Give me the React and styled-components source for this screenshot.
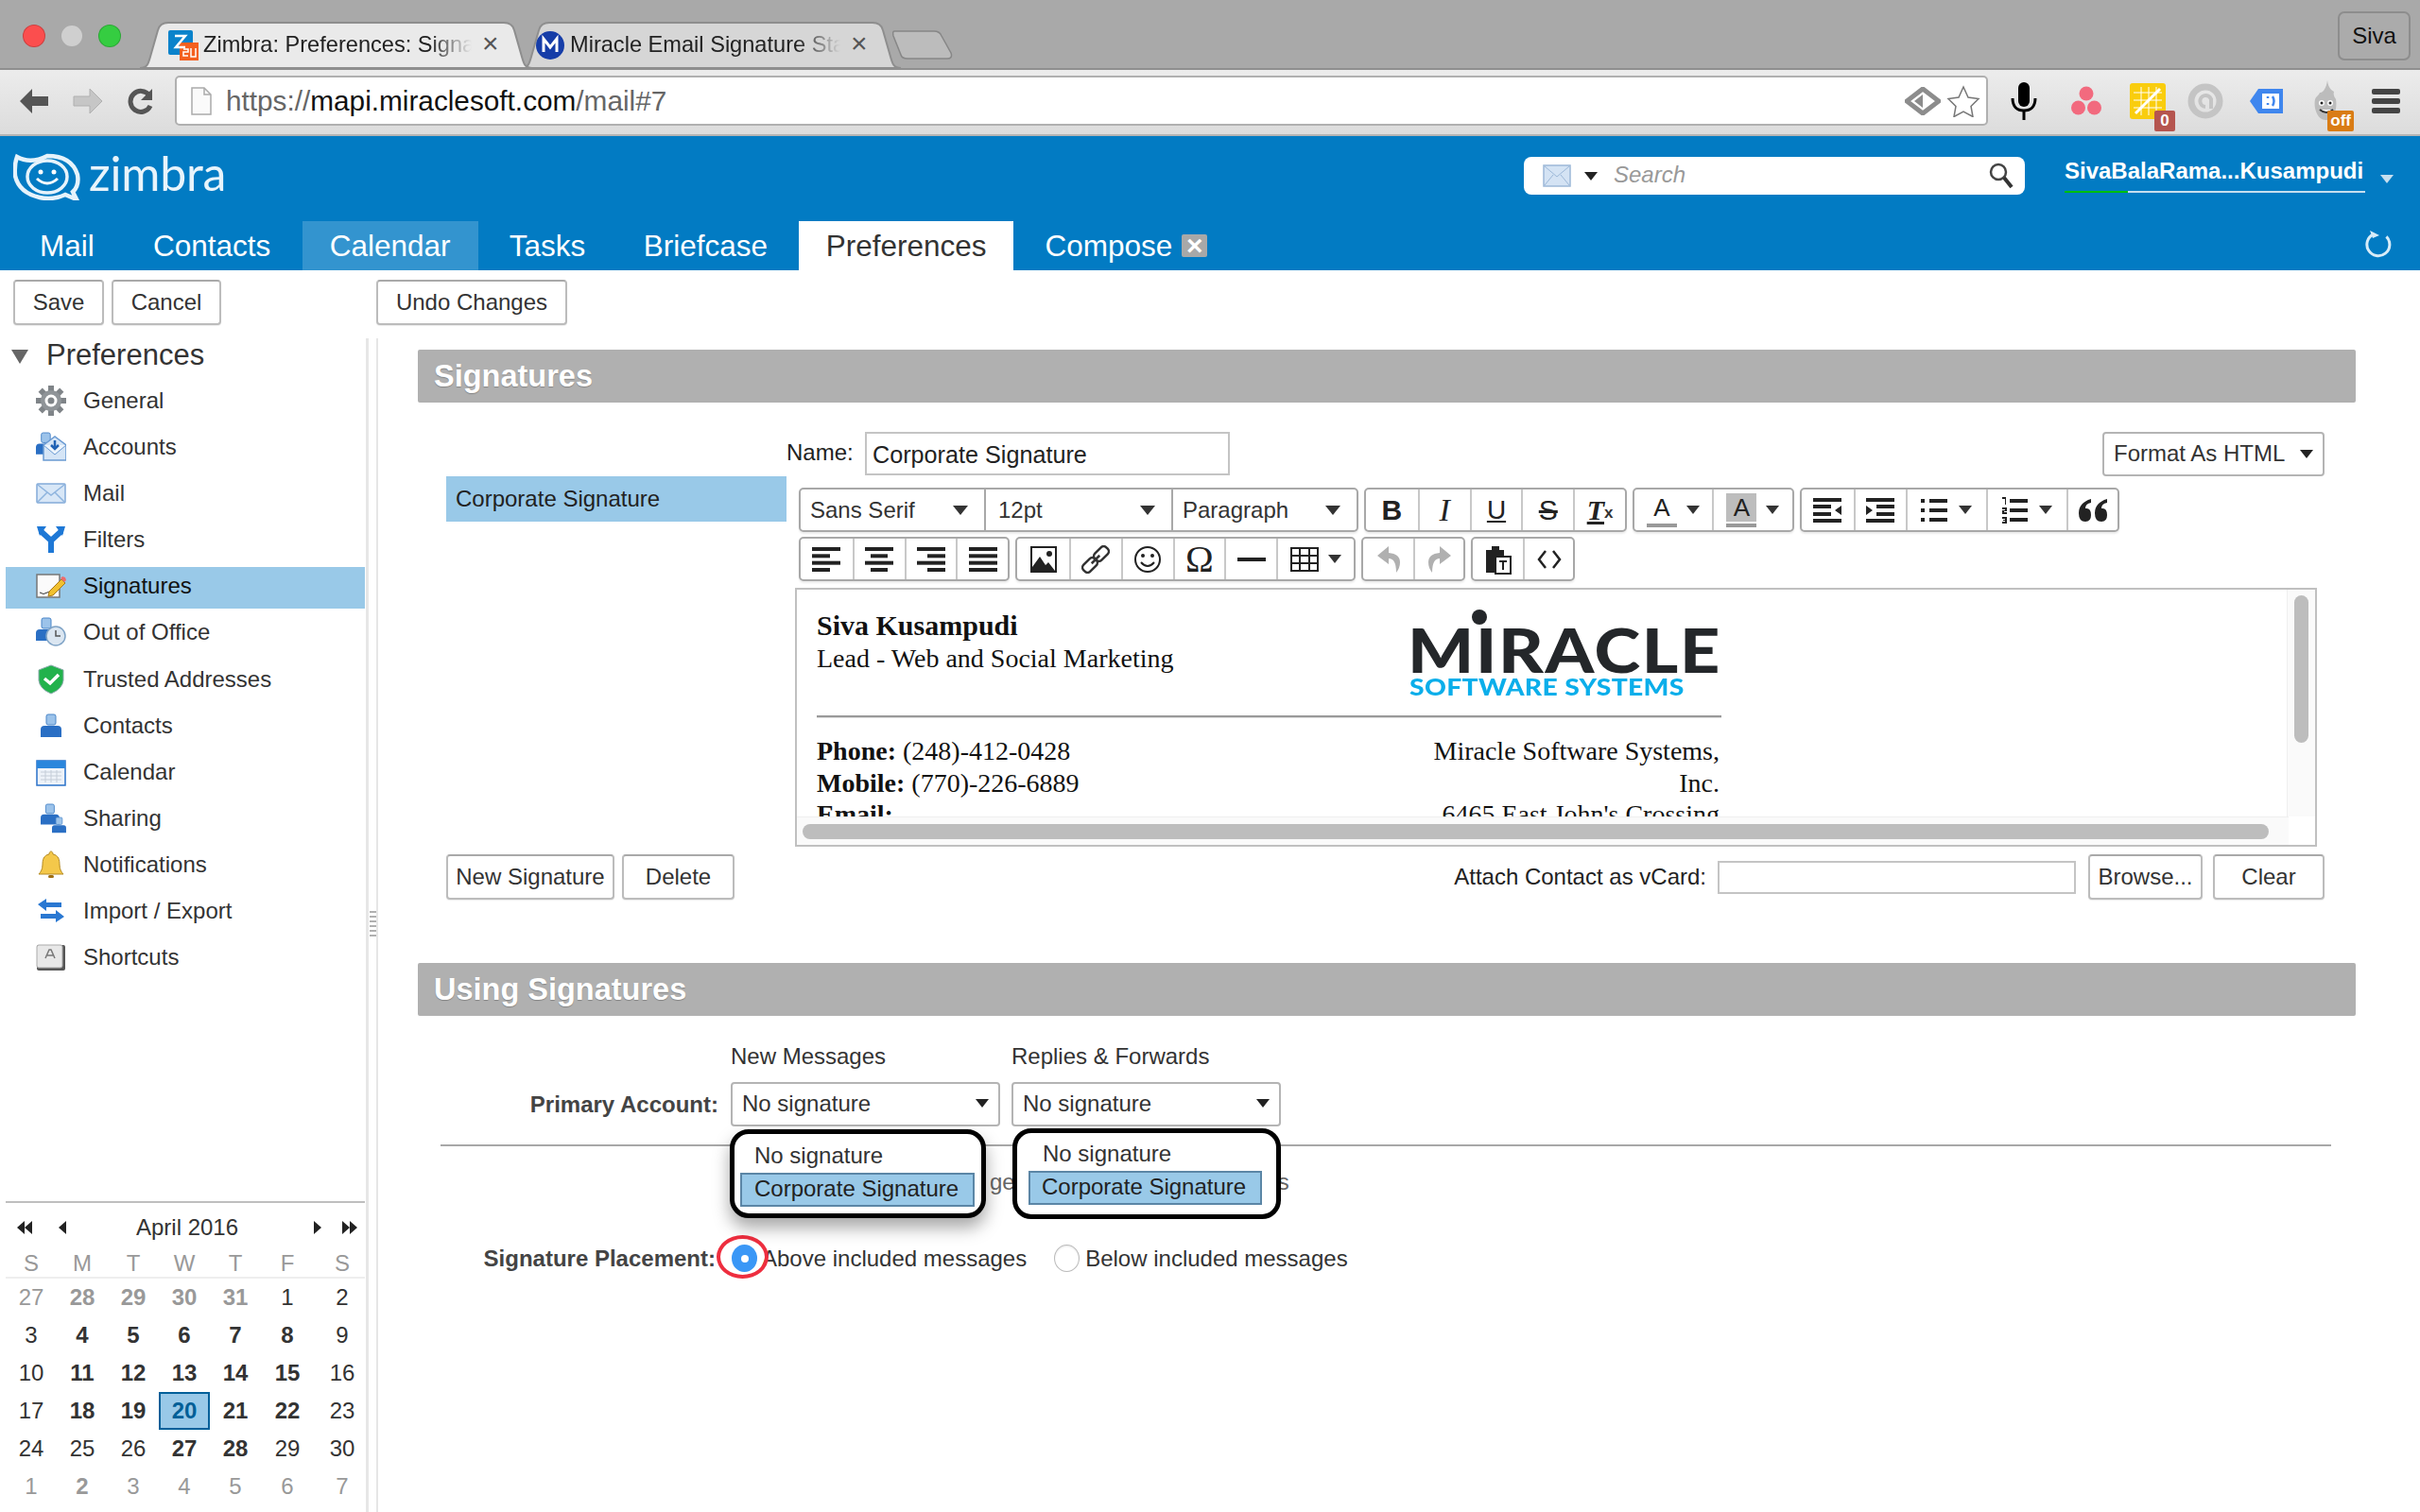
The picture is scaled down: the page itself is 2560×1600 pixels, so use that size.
import React from 'react';
import styled, { createGlobalStyle } from 'styled-components';

const Global = createGlobalStyle`
  html, body { margin: 0; padding: 0; width: 2560px; height: 1600px; overflow: hidden; background: #fff; }
  body { font-family: "Liberation Sans", Arial, sans-serif; font-size: 24px; color: #333; }
  * { box-sizing: border-box; }
`;

const Page = styled.div`width: 2560px; height: 1600px; display: flex; flex-direction: column; overflow: hidden;`;

/* Browser chrome */
const TabStrip = styled.div`height: 72px; flex: none; background: #a9a9a9; display: flex; align-items: flex-end; padding-left: 24px; position: relative;`;
const Lights = styled.div`display: flex; gap: 16px; align-self: flex-start; margin-top: 26px; margin-right: 20px;`;
const Light = styled.span`width: 24px; height: 24px; border-radius: 50%; background: ${p => p.$c}; border: 1px solid rgba(0,0,0,.18);`;
const BrowserTab = styled.div`
  position: relative; height: 49px; width: ${p => p.$w}px; margin-left: ${p => p.$ml || 0}px; flex: none;
  display: flex; align-items: center; padding-left: ${p => p.$pl}px; z-index: ${p => p.$z};
  font-size: 23.6px; color: #222;
  & > svg.shape { position: absolute; left: 0; top: 0; z-index: -1; }
`;
const TabTitle = styled.span`
  margin-left: 5px; width: ${p => p.$w}px; white-space: nowrap; flex: none;
  mask-image: linear-gradient(to right, #000 84%, transparent 100%);
`;
const TabClose = styled.span`margin-left: 11px; font-size: 30px; color: #555; line-height: 1; margin-top: -3px;`;
const NewTab = styled.div`margin-left: -9px; margin-bottom: 9px; width: 64px; height: 31px; flex: none;`;
const Profile = styled.div`
  position: absolute; right: 10px; top: 12px; width: 77px; height: 52px; border: 2px solid #8d8d8d; border-radius: 7px;
  display: flex; align-items: center; justify-content: center; font-size: 24px; color: #111; background: #ababab;
`;
const Toolbar = styled.div`
  height: 72px; flex: none; background: linear-gradient(#ececec, #dcdcdc); border-bottom: 2px solid #b4b4b4; border-top: 2px solid #8f8f8f;
  display: flex; align-items: center; padding-left: 20px; position: relative;
`;
const NavIcons = styled.div`display: flex; align-items: center; gap: 25px; width: 165px; margin-top: -3px;`;
const Omnibox = styled.div`
  width: 1918px; height: 53px; background: #fff; border: 2px solid #b0b0b0; border-radius: 5px; margin-top: -3px;
  display: flex; align-items: center; padding-left: 15px; font-size: 29.75px; color: #666; flex: none;
`;
const Host = styled.span`color: #111;`;
const UrlText = styled.span`margin-left: 15px; margin-top: 1px;`;
const OmniRight = styled.div`margin-left: auto; display: flex; align-items: center; gap: 6px; padding-right: 6px;`;
const Extensions = styled.div`flex: 1; display: flex; align-items: center; margin-top: -3px; position: relative; height: 60px;`;
const Ext = styled.div`position: relative; width: ${p => p.$w}px; margin-left: ${p => p.$ml}px; height: 44px; flex: none; display: flex; align-items: center; justify-content: center;`;
const ExtBadge = styled.span`
  position: absolute; right: ${p => p.$r}px; bottom: -10px; height: 22px; min-width: 22px; padding: 0 3px; background: ${p => p.$c};
  border-radius: 2px; color: #fff; font-size: 17px; line-height: 22px; text-align: center; font-weight: 700;
`;

/* Zimbra header */
const Header = styled.div`height: 142px; flex: none; background: #027bc3; display: flex; flex-direction: column;`;
const HeaderTop = styled.div`height: 90px; display: flex; align-items: flex-start; position: relative; padding-left: 14px;`;
const LogoBox = styled.div`display: flex; align-items: flex-start; margin-top: 18px; width: 226px; flex: none;`;
const LogoText = styled.span`
  font-family: Lato, "Open Sans", sans-serif; font-weight: 400; font-size: 50px; line-height: 48px; color: #e8f4fb; margin-left: 7px; margin-top: -3px; letter-spacing: -.2px;
`;
const SearchBox = styled.div`
  margin-left: 1372px; margin-top: 22px; width: 530px; height: 40px; background: #fff; border-radius: 8px;
  display: flex; align-items: center; padding: 0 12px 0 20px; flex: none;
`;
const SearchText = styled.span`font-style: italic; color: #999; margin-left: 17px; font-size: 24px; margin-top: -2px;`;
const Caret = styled.span`
  display: inline-block; width: 0; height: 0; flex: none;
  border-left: ${p => p.$s || 7}px solid transparent; border-right: ${p => p.$s || 7}px solid transparent;
  border-top: ${p => (p.$s || 7) * 1.3}px solid ${p => p.$c || '#222'};
`;
const UserBox = styled.div`margin-left: 42px; margin-top: 24px; width: 318px; flex: none;`;
const UserName = styled.div`
  color: #fff; font-weight: 700; font-size: 24px; white-space: nowrap; line-height: 26px;
`;
const Quota = styled.div`margin-top: 8px; height: 2px; background: #c6dfef; position: relative;`;
const QuotaFill = styled.div`height: 100%; background: #00c000;`;
const UserCaret = styled.span`margin-left: 16px; margin-top: 28px;`;
const Nav = styled.div`height: 52px; display: flex; align-items: stretch; padding-left: 13px; gap: 4.3px; position: relative;`;
const NavTab = styled.div`
  display: flex; align-items: center; padding: 0 ${p => p.$pr || p.$pad || 29}px 0 ${p => p.$pad || 29}px; font-size: 31.5px;
  background: ${p => p.$active ? '#fff' : p.$hover ? '#3394cf' : 'transparent'};
  color: ${p => p.$active ? '#333' : '#fff'};
  flex: none;
`;
const CloseBox = styled.span`
  width: 27px; height: 24px; margin-left: 10px; background: #a8a8a8; border-radius: 2px; color: #fff; font-size: 30px; font-weight: 700;
  display: inline-flex; align-items: center; justify-content: center; line-height: 24px;
`;
const NavRefresh = styled.div`margin-left: auto; margin-right: 29px; margin-top: -4px; display: flex; align-items: center;`;

/* Buttons */
const Btn = styled.div`
  height: 48px; border: 2px solid #bcbcbc; border-top-color: #a9a9a9; border-radius: 4px; background: #fff; font-size: 24px; color: #333;
  display: flex; align-items: center; justify-content: center; flex: none; width: ${p => p.$w}px;
  margin-left: ${p => p.$ml || 0}px; box-shadow: 0 1px 1px rgba(0,0,0,.08);
`;
const ActionBar = styled.div`height: 64px; flex: none; display: flex; align-items: flex-start; padding: 10px 0 0 14px; gap: 8px;`;

/* Body layout */
const Body = styled.div`flex: 1; display: flex; padding-top: 8px; min-height: 0;`;
const Sidebar = styled.div`width: 390px; flex: none; border-right: 3px solid #e6e6e6; display: flex; flex-direction: column;`;
const Sash = styled.div`width: 10px; flex: none; border-right: 2px solid #e6e6e6; display: flex; flex-direction: column; padding-top: 606px; align-items: center; gap: 3px;`;
const SashDot = styled.span`width: 7px; height: 2px; background: #b0b0b0; flex: none;`;
const TreeHead = styled.div`height: 32px; margin-top: 2px; display: flex; align-items: center; font-size: 31px; color: #333; padding-left: 12px;`;
const TreeArrow = styled.span`width: 0; height: 0; border-left: 9px solid transparent; border-right: 9px solid transparent; border-top: 15px solid #666; margin-right: 19px; margin-top: 3px;`;
const TreeList = styled.div`margin-top: 12px; display: flex; flex-direction: column; gap: 5.1px;`;
const TreeItem = styled.div`
  height: 44px; margin-left: 6px; width: 380px; padding: 0 0 4px 32px; display: flex; align-items: center; gap: 18px; font-size: 24px;
  color: ${p => p.$sel ? '#111' : '#333'}; background: ${p => p.$sel ? '#99c9e8' : 'transparent'};
`;
const TreeIcon = styled.span`width: 32px; height: 32px; flex: none; display: block;`;

const Cal = styled.div`margin-top: auto; margin-bottom: 7px; margin-left: 6px; width: 380px; border-top: 2px solid #bfbfbf; flex: none;`;
const CalHead = styled.div`height: 49px; padding: 3px 8px 0 12px; display: flex; align-items: center; justify-content: space-between; color: #333;`;
const CalTitle = styled.span`margin-right: 6px;`;
const CalArrows = styled.div`display: flex; align-items: center; gap: ${p => p.$g || 26}px;`;
const CalRow = styled.div`display: grid; grid-template-columns: 54px 54px 54px 54px 54px 56px 60px; height: ${p => p.$h}px; align-items: center; ${p => p.$line ? 'border-bottom: 2px solid #eee;' : ''}`;
const CalCell = styled.span`
  text-align: center; font-size: 24px; font-weight: ${p => p.$b ? 700 : 400}; color: ${p => p.$c || '#333'};
  ${p => p.$sel ? 'background:#99c9e8;border:2px solid #00609a;height:40px;line-height:36px;' : ''}
`;

/* Main */
const Main = styled.div`flex: 1; padding-left: 42px; min-width: 0;`;
const SectionBar = styled.div`
  width: 2050px; height: 56px; background: #b0b0b0; border-radius: 2px; margin-top: ${p => p.$mt}px; color: #fff; font-weight: 700; font-size: 32.5px;
  display: flex; align-items: center; padding: 1px 0 0 17px; text-shadow: 0 1px 1px rgba(0,0,0,.25);
`;
const SigTop = styled.div`display: flex; padding-left: 30px;`;
const SigList = styled.div`width: 360px; flex: none; padding-top: 78px;`;
const SigItem = styled.div`height: 48px; background: #99c9e8; padding-left: 10px; display: flex; align-items: center; color: #222;`;
const SigRight = styled.div`width: 1627px; flex: none;`;
const NameRow = styled.div`display: flex; align-items: center; margin-top: 31px; height: 46px; padding-left: 0;`;
const NameLabel = styled.span`color: #222; width: 83px; flex: none; margin-top: -2px;`;
const TextBox = styled.div`
  width: ${p => p.$w}px; height: ${p => p.$h || 46}px; border: 2px solid #c4c4c4; padding: 2px 0 0 6px; display: flex; align-items: center; color: #222; flex: none; background: #fff; font-size: 25.2px;
`;
const FormatBtn = styled.div`
  margin-left: auto; width: 235px; height: 47px; border: 2px solid #b4b4b4; border-radius: 4px; display: flex; align-items: center; justify-content: space-between; padding: 0 10px; color: #333;
`;
const McRow = styled.div`display: flex; gap: ${p => p.$g || 6}px; padding-left: 13px; margin-top: ${p => p.$mt}px; height: 47px;`;
const McGroup = styled.div`display: flex; border: 2px solid #a8a8a8; border-radius: 5px; background: #fff; box-shadow: 0 2px 2px rgba(0,0,0,.08); flex: none;`;
const McBtn = styled.div`
  width: ${p => p.$w || 54.8}px; flex: none; display: flex; align-items: center; justify-content: center; gap: ${p => p.$gap || 0}px;
  border-left: ${p => p.$first ? 'none' : '2px solid #c8c8c8'}; color: ${p => p.$dis ? '#aaa' : '#333'}; position: relative;
`;
const McSelect = styled.div`
  width: ${p => p.$w}px; flex: none; display: flex; align-items: center; justify-content: space-between; padding: 0 17px 0 ${p => p.$pl || 10}px; font-size: 24px; color: #333;
  border-left: ${p => p.$first ? 'none' : '2px solid #a8a8a8'};
`;
const Glyph = styled.span`
  font-family: ${p => p.$serif ? '"Liberation Serif"' : '"Liberation Sans"'}, serif; font-size: ${p => p.$s}px; line-height: 1;
  font-weight: ${p => p.$b ? 700 : 400}; font-style: ${p => p.$i ? 'italic' : 'normal'}; color: #222;
  text-decoration: ${p => p.$d || 'none'};
`;
const SmallX = styled.span`font-size: 17px; font-weight: 700; color: #333; align-self: flex-end; margin-bottom: 8px;`;
const ColorA = styled.span`
  display: inline-flex; flex-direction: column; align-items: center; width: 32px; font-size: 26px; line-height: 30px; color: #222; position: relative;
  background: transparent;
`;
const ColorALetter = styled.span`width: 100%; text-align: center; background: ${p => p.$bg || 'transparent'};`;
const ColorBar = styled.span`width: 100%; height: 4px; background: #999; margin-top: 2px;`;

const Editor = styled.div`
  margin: 7px 0 0 9px; width: 1610px; height: 274px; border: 2px solid #c0c0c0; position: relative; overflow: hidden; background: #fff;
  font-family: "Liberation Serif", serif; font-size: 28px; color: #111;
`;
const SigDoc = styled.div`margin: 21px 0 0 21px; width: 957px;`;
const SigHead = styled.div`display: flex; justify-content: space-between; height: 112px;`;
const SigName = styled.div`font-weight: 700; font-size: 30px; line-height: 34px;`;
const SigLine = styled.div`line-height: 35px; white-space: nowrap;`;
const Brand = styled.div`position: relative; width: 327px; margin-right: 2px; height: 112px; font-family: Lato, "Open Sans", sans-serif;`;
const BrandTitle = styled.div`position: absolute; left: -3px; top: 16px; font-weight: 900; font-size: 65px; line-height: 52px; color: #24272a; letter-spacing: 1.5px; white-space: nowrap; transform: scaleX(1.135); transform-origin: left center;`;
const BrandDot = styled.span`position: absolute; left: 65px; top: 0; width: 16px; height: 16px; border-radius: 50%; background: #24272a;`;
const BrandSub = styled.div`position: absolute; left: -1px; top: 69px; font-weight: 900; font-size: 25px; line-height: 24px; color: #0baeea; white-space: nowrap; letter-spacing: .3px; transform: scaleX(1.13); transform-origin: left center;`;
const SigRule = styled.div`height: 3px; background: #999; border-bottom: 1px solid #ddd;`;
const SigBody = styled.div`display: flex; justify-content: space-between; margin-top: 18px; line-height: 33.5px;`;
const SigAddr = styled.div`text-align: right; margin-right: 2px; white-space: nowrap;`;
const VBar = styled.div`position: absolute; right: 0; top: 0; width: 30px; height: 240px; background: #fafafa; border-left: 1px solid #efefef;`;
const VThumb = styled.div`margin: 6px 0 0 7px; width: 15px; height: 156px; border-radius: 8px; background: #bdbdbd;`;
const HBar = styled.div`position: absolute; left: 0; bottom: 0; width: 1578px; height: 30px; background: #fafafa; border-top: 1px solid #efefef; padding: 7px 0 0 6px;`;
const HThumb = styled.div`width: 1551px; height: 16px; border-radius: 8px; background: #bdbdbd;`;
const SigBottom = styled.div`display: flex; align-items: center; padding-left: 30px; margin-top: 8px; width: 2017px;`;
const AttachLabel = styled.span`margin-left: auto; margin-right: 12px; color: #222;`;

const ColHead = styled.div`display: flex; padding-left: 331px; margin-top: 28px; height: 30px; align-items: center; color: #333;`;
const ColLabel = styled.span`width: 297px; flex: none;`;
const AccountRow = styled.div`display: flex; align-items: center; margin-top: 12px; height: 47px;`;
const RowLabel = styled.span`width: ${p => p.$w}px; flex: none; text-align: right; font-weight: 700; color: #444; white-space: nowrap;`;
const SelectWrap = styled.div`position: relative; width: 285px; margin-left: ${p => p.$ml}px; flex: none;`;
const Select = styled.div`
  height: 47px; border: 2px solid #b4b4b4; border-radius: 4px; display: flex; align-items: center; justify-content: space-between; padding: 0 10px 2px 10px; color: #333; background: #fff;
`;
const Popup = styled.div`
  position: absolute; left: ${p => p.$l}px; top: ${p => p.$t}px; width: ${p => p.$w}px; height: ${p => p.$h}px; background: #fff; border: 5px solid #000; border-radius: 20px;
  z-index: 3; padding: ${p => p.$pt}px 0 0 ${p => p.$pl}px; box-shadow: ${p => p.$shadow ? '0 10px 18px rgba(0,0,0,.35)' : 'none'}; color: #333;
`;
const PopNo = styled.div`height: 32px; line-height: 32px; padding-left: ${p => p.$i}px;`;
const PopSel = styled.div`
  margin-top: 2px; width: ${p => p.$w}px; height: 36px; background: #99c9e8; border: 2px solid #5b86a6; padding-left: ${p => p.$i - 2}px; line-height: 30px; color: #222;
`;
const Divider = styled.div`margin: 19px 0 0 24px; width: 2000px; height: 2px; background: #a8a8a8;`;
const HiddenRow = styled.div`height: 96px; display: flex; align-items: flex-start; padding: 24px 0 0 605px; color: #666;`;
const HiddenEnd = styled.span`margin-left: 278px;`;
const PlaceRow = styled.div`display: flex; align-items: center; height: 45px;`;
const RadioWrap = styled.span`position: relative; width: 27px; height: 29px; margin-left: ${p => p.$ml}px; margin-right: ${p => p.$mr}px; flex: none; display: block;`;
const RadioOn = styled.span`display: flex; align-items: center; justify-content: center; width: 27px; height: 29px; border-radius: 50%; background: #3a97f6;`;
const RadioPip = styled.span`width: 8px; height: 8px; background: #fff; border-radius: 50%;`;
const RadioOff = styled.span`display: block; width: 27px; height: 29px; border-radius: 50%; border: 1.5px solid #bbb; background: #fff; box-shadow: inset 0 1px 2px rgba(0,0,0,.1);`;
const RedRing = styled.span`position: absolute; left: -16px; top: -10px; width: 55px; height: 46px; border: 4px solid #ee2e3f; border-radius: 50%;`;
const PlaceText = styled.span`color: #333; white-space: nowrap;`;

/* Drawings */
const TabShape = ({ w, fill, stroke }) => (
  <svg className="shape" width={w} height="49" viewBox={`0 0 ${w} 49`}>
    <path d={`M0 49 C8 49 9 44 11 37 L19 9 Q21 1 30 1 H${w - 30} Q${w - 21} 1 ${w - 19} 9 L${w - 11} 37 C${w - 9} 44 ${w - 8} 49 ${w} 49 Z`} fill={fill} stroke={stroke} strokeWidth="2" />
  </svg>
);
const Ic = ({ children, s = 32, vb = 32 }) => <svg width={s} height={s} viewBox={`0 0 ${vb} ${vb}`} style={{ display: 'block' }}>{children}</svg>;

const Person = ({ x = 0, y = 0, k = 1 }) => (
  <g transform={`translate(${x} ${y}) scale(${k})`}>
    <rect x="6" y="0" width="10" height="11" rx="2" fill="#9cc3ea" stroke="#4a86c8" />
    <path d="M0 24 V16 Q0 12 4 12 H18 Q22 12 22 16 V24 Z" fill="#2a6fc4" />
  </g>
);
const TreeIcons = {
  General: <Ic><g fill="#7f8488">{[0, 45, 90, 135, 180, 225, 270, 315].map(a => <rect key={a} x="13" y="0" width="6" height="8" transform={`rotate(${a} 16 16)`} />)}</g><circle cx="16" cy="16" r="11" fill="#8f9498" /><circle cx="16" cy="16" r="6.500" fill="#fff" /><circle cx="16" cy="16" r="3.500" fill="#7f8488" /></Ic>,
  Accounts: <Ic><Person x={0} y={1} k={.95} /><path d="M8 14 L20 5 L32 14 V30 H8 Z" fill="#d5e5f6" stroke="#6a9ad2" strokeWidth="1.500" /><path d="M8 14 L20 24 L32 14" fill="#eef5fc" stroke="#6a9ad2" /><path d="M20 9v8M16 14l4 4 4-4" stroke="#1f62b5" strokeWidth="2.500" fill="none" /></Ic>,
  Mail: <Ic><rect x="1" y="6" width="30" height="20" rx="1" fill="#d8e7f7" stroke="#82abd9" strokeWidth="1.500" /><path d="M2 7l14 11L30 7M2 25l10-10M30 25L20 15" fill="none" stroke="#8eb4de" strokeWidth="1.500" /></Ic>,
  Filters: <Ic><path d="M16 30 V17 M16 17 L5 7 M16 17 L27 7" stroke="#1e78d6" strokeWidth="6" fill="none" /><path d="M1 2h10l-7 10zM31 2H21l7 10z" fill="#1e78d6" /></Ic>,
  Signatures: <Ic><rect x="1" y="4" width="24" height="24" fill="#fbfbfb" stroke="#777" strokeWidth="1.500" /><path d="M4 23q4 3 8 0t6 0" stroke="#333" fill="none" /><path d="M14 22L27 9l4 4-13 13-5 1z" fill="#f0c030" stroke="#a8791a" /><path d="M26 8l2-2 3 1 1 3-2 2z" fill="#ee6c6c" /></Ic>,
  'Out of Office': <Ic><Person x={0} y={1} k={1} /><circle cx="21" cy="20" r="10" fill="#dbe6f1" stroke="#7fa3c6" strokeWidth="1.500" /><path d="M21 14v6h5" stroke="#555" strokeWidth="1.500" fill="none" /></Ic>,
  'Trusted Addresses': <Ic><path d="M16 1 L29 6 V17 Q28 26 16 31 Q4 26 3 17 V6 Z" fill="#22b24c" stroke="#8aa" /><path d="M9 15l6 5 9-9" stroke="#fff" strokeWidth="3.500" fill="none" /></Ic>,
  Contacts: <Ic><Person x={5} y={4} k={1} /></Ic>,
  Calendar: <Ic><rect x="1" y="4" width="30" height="26" fill="#eef3f9" stroke="#2a72c9" strokeWidth="1.500" /><rect x="1" y="4" width="30" height="8" fill="#2a86dc" /><path d="M5 16h22M5 20h22M5 24h22M10 14v13M16 14v13M22 14v13" stroke="#c4cdd8" /></Ic>,
  Sharing: <Ic><Person x={5} y={1} k={.9} /><Person x={17} y={15} k={.68} /></Ic>,
  Notifications: <Ic><path d="M16 2c1 0 2 1 2 3 6 1 7 6 7 11 0 5 2 8 4 10H3c2-2 4-5 4-10 0-5 1-10 7-11 0-2 1-3 2-3z" fill="#f4c84a" stroke="#b48a22" /><rect x="13" y="27" width="6" height="3" rx="1.500" fill="#a06f12" /></Ic>,
  'Import / Export': <Ic><path d="M2 9l9-6v4h16v5H11v4z" fill="#2a78d2" /><path d="M30 22l-9 6v-4H5v-5h16v-4z" fill="#2a78d2" /></Ic>,
  Shortcuts: <Ic><rect x="1" y="3" width="30" height="27" rx="2" fill="#555" /><rect x="1" y="3" width="27" height="24" rx="2" fill="#e8e8e8" stroke="#aaa" /><path d="M10 17l4-9h2l4 9M12 14h6" stroke="#777" strokeWidth="1.500" fill="none" /></Ic>,
};
const TREE = ['General', 'Accounts', 'Mail', 'Filters', 'Signatures', 'Out of Office', 'Trusted Addresses', 'Contacts', 'Calendar', 'Sharing', 'Notifications', 'Import / Export', 'Shortcuts'];

const G = '#999';
const CAL = [
  [['27', 0, G], ['28', 1, G], ['29', 1, G], ['30', 1, G], ['31', 1, G], ['1', 0], ['2', 0]],
  [['3', 0], ['4', 1], ['5', 1], ['6', 1], ['7', 1], ['8', 1], ['9', 0]],
  [['10', 0], ['11', 1], ['12', 1], ['13', 1], ['14', 1], ['15', 1], ['16', 0]],
  [['17', 0], ['18', 1], ['19', 1], ['20', 1, '#005f97', true], ['21', 1], ['22', 1], ['23', 0]],
  [['24', 0], ['25', 0], ['26', 0], ['27', 1], ['28', 1], ['29', 0], ['30', 0]],
  [['1', 0, G], ['2', 1, G], ['3', 0, G], ['4', 0, G], ['5', 0, G], ['6', 0, G], ['7', 0, G]],
];

const Bars = ({ rows }) => (
  <svg width="30" height="26" viewBox="0 0 30 26">{rows.map(([x, w], i) => <rect key={i} x={x} y={i * (22 / (rows.length - 1))} width={w} height="4" fill="#222" />)}</svg>
);
const Tri = ({ d, s = 16 }) => <svg width={s} height={s + 2} viewBox="0 0 16 18"><path d={d} fill="#222" /></svg>;

export default function App() {
  return (
    <Page>
      <Global />
      <TabStrip>
        <Lights>
          <Light $c="#fb4e4e" />
          <Light $c="#cfcfcf" />
          <Light $c="#35cd41" />
        </Lights>
        <BrowserTab $w={415} $pl={30} $z={3}>
          <TabShape w={415} fill="#eaeaea" stroke="#8e8e8e" />
          <svg width="32" height="32" viewBox="0 0 32 32"><rect x="0" y="0" width="26" height="26" rx="2" fill="#0b83cb" /><rect x="12" y="13" width="20" height="19" fill="#f4601f" /><path d="M7 6h11L8 18h10" stroke="#fff" strokeWidth="2.500" fill="none" /><path d="M16 20h5v3h-5v4h5M24 19v9h5v-9" stroke="#fff" strokeWidth="1.500" fill="none" /></svg>
          <TabTitle $w={284}>Zimbra: Preferences: Signa</TabTitle>
          <TabClose>×</TabClose>
        </BrowserTab>
        <BrowserTab $w={402} $ml={-12} $pl={15} $z={2}>
          <TabShape w={402} fill="#d6d6d6" stroke="#8e8e8e" />
          <svg width="32" height="32" viewBox="0 0 32 32"><circle cx="16" cy="16" r="15" fill="#163da8" /><path d="M9 23V9l7 9 7-9v14" stroke="#fff" strokeWidth="3" fill="none" /></svg>
          <TabTitle $w={286}>Miracle Email Signature Sta</TabTitle>
          <TabClose>×</TabClose>
        </BrowserTab>
        <NewTab>
          <svg width="64" height="31" viewBox="0 0 64 31"><path d="M2 1 H44 Q50 1 52 6 L62 24 Q64 30 58 30 H16 Q10 30 9 26 L1 6 Q0 1 2 1Z" fill="#bcbcbc" stroke="#878787" strokeWidth="1.500" /></svg>
        </NewTab>
        <Profile>Siva</Profile>
      </TabStrip>

      <Toolbar>
        <NavIcons>
          <svg width="32" height="28" viewBox="0 0 32 28"><path d="M14 1L1 14l13 13v-8h17V9H14z" fill="#555" /></svg>
          <svg width="32" height="28" viewBox="0 0 32 28"><path d="M18 1l13 13-13 13v-8H1V9h17z" fill="#c6c6c6" stroke="#b0b0b0" /></svg>
          <svg width="28" height="28" viewBox="0 0 28 28"><path d="M24 8A11 11 0 1 0 25 19" fill="none" stroke="#555" strokeWidth="5" /><path d="M27 1v12H15z" fill="#555" /></svg>
        </NavIcons>
        <Omnibox>
          <svg width="22" height="30" viewBox="0 0 22 30"><path d="M1 1h13l7 7v21H1z" fill="#fafafa" stroke="#aaa" strokeWidth="1.500" /><path d="M14 1v7h7" fill="none" stroke="#aaa" strokeWidth="1.500" /></svg>
          <UrlText>https://<Host>mapi.miraclesoft.com</Host>/mail#7</UrlText>
          <OmniRight>
            <svg width="38" height="30" viewBox="0 0 38 30"><path d="M19 2L36 15 19 28 2 15z" fill="none" stroke="#8c8c8c" strokeWidth="5" /><path d="M19 8l-9 7 9 7z" fill="#8c8c8c" /></svg>
            <svg width="36" height="34" viewBox="0 0 36 34"><path d="M18 2l5 11 11 1.500-8 8 2 11-10-5.500-10 5.500 2-11-8-8 11-1.500z" fill="#fff" stroke="#777" strokeWidth="1.500" /></svg>
          </OmniRight>
        </Omnibox>
        <Extensions>
          <Ext $w={28} $ml={24}>
            <svg width="28" height="40" viewBox="0 0 28 40"><rect x="8" y="0" width="12" height="26" rx="6" fill="#000" /><path d="M2 17c0 9 5 13 12 13s12-4 12-13" fill="none" stroke="#000" strokeWidth="3" /><path d="M14 30v10" stroke="#000" strokeWidth="3" /></svg>
          </Ext>
          <Ext $w={32} $ml={36}>
            <svg width="32" height="34" viewBox="0 0 32 34"><circle cx="16" cy="9" r="7.500" fill="#f26a7e" /><circle cx="7.500" cy="24" r="7.500" fill="#f26a7e" /><circle cx="24.500" cy="24" r="7.500" fill="#f26a7e" /></svg>
          </Ext>
          <Ext $w={38} $ml={30}>
            <svg width="38" height="38" viewBox="0 0 38 38"><rect width="38" height="38" rx="3" fill="#f9cd0e" /><path d="M4 10h30M4 18h30M4 26h30M12 4v30M20 4v30M28 4v30" stroke="#fff" strokeWidth="1" /><path d="M6 32L32 6" stroke="#fff" strokeWidth="3" /></svg>
            <ExtBadge $c="#b5554f" $r={-10}>0</ExtBadge>
          </Ext>
          <Ext $w={38} $ml={23}>
            <svg width="38" height="38" viewBox="0 0 38 38"><circle cx="19" cy="19" r="15" fill="none" stroke="#c4c4c4" strokeWidth="7" /><path d="M25 27V17a6 6 0 1 0-6 8" fill="none" stroke="#c4c4c4" strokeWidth="4" /></svg>
          </Ext>
          <Ext $w={38} $ml={27}>
            <svg width="38" height="30" viewBox="0 0 38 30"><path d="M10 2H36V28H10L1 15z" fill="#3f86ee" /><rect x="14" y="7" width="18" height="16" fill="#fff" /><path d="M20 10v2M20 17v2M25 10q3 5 0 10" stroke="#3f86ee" strokeWidth="2.500" fill="none" /></svg>
          </Ext>
          <Ext $w={30} $ml={29}>
            <svg width="30" height="44" viewBox="0 0 30 44"><path d="M16 0c1 8 4 10 7 12-1 3 0 5 2 8 2 12-3 22-11 22S1 30 3 20c1-3 4-4 5-7 3 1 7-5 8-13z" fill="#bcbcbc" /><circle cx="10" cy="24" r="3" fill="#fff" /><circle cx="19" cy="24" r="3" fill="#fff" /><circle cx="10" cy="24" r="1.500" fill="#222" /><circle cx="19" cy="24" r="1.500" fill="#222" /><path d="M8 31q7 6 14 0" stroke="#333" strokeWidth="2" fill="#fff" /></svg>
            <ExtBadge $c="#d97c15" $r={-14}>off</ExtBadge>
          </Ext>
          <Ext $w={30} $ml={33}>
            <svg width="30" height="26" viewBox="0 0 30 26"><rect y="0" width="30" height="6" rx="2" fill="#444" /><rect y="10" width="30" height="6" rx="2" fill="#444" /><rect y="20" width="30" height="6" rx="2" fill="#444" /></svg>
          </Ext>
        </Extensions>
      </Toolbar>

      <Header>
        <HeaderTop>
          <LogoBox>
            <svg width="73" height="50" viewBox="0 0 73 50">
              <path d="M4 4q14 8 32-1 26 0 32 20 2 12-5 18l4 8-12-5Q42 50 28 47 6 42 2 24Q1 12 4 4z" fill="none" stroke="#e6f3fb" strokeWidth="4.500" />
              <ellipse cx="36" cy="25" rx="21" ry="17" fill="none" stroke="#e6f3fb" strokeWidth="3.500" />
              <circle cx="29" cy="20" r="2.500" fill="#fff" /><circle cx="43" cy="20" r="2.500" fill="#fff" />
              <path d="M25 27q11 10 22 0" stroke="#fff" strokeWidth="3" fill="none" />
            </svg>
            <LogoText>zimbra</LogoText>
          </LogoBox>
          <SearchBox>
            <svg width="30" height="26" viewBox="0 0 30 26"><rect x="1" y="2" width="28" height="22" fill="#d4e3f4" stroke="#9cb8d8" strokeWidth="1.500" /><path d="M2 3l13 11L28 3M2 23l9-11M28 23l-9-11" fill="none" stroke="#9cb8d8" /></svg>
            <Caret $s={7} style={{ marginLeft: 14 }} />
            <SearchText>Search</SearchText>
            <svg width="26" height="28" viewBox="0 0 26 28" style={{ marginLeft: 'auto' }}><circle cx="10" cy="10" r="8" fill="#fff" stroke="#444" strokeWidth="2.500" /><path d="M16 16l8 10" stroke="#333" strokeWidth="4" /></svg>
          </SearchBox>
          <UserBox>
            <UserName>SivaBalaRama...Kusampudi</UserName>
            <Quota><QuotaFill style={{ width: '21%' }} /></Quota>
          </UserBox>
          <UserCaret><Caret $s={7} $c="#c6dfef" /></UserCaret>
        </HeaderTop>
        <Nav>
          <NavTab>Mail</NavTab>
          <NavTab>Contacts</NavTab>
          <NavTab $hover>Calendar</NavTab>
          <NavTab $pr={28}>Tasks</NavTab>
          <NavTab>Briefcase</NavTab>
          <NavTab $active $pad={28.5}>Preferences</NavTab>
          <NavTab>Compose<CloseBox>×</CloseBox></NavTab>
          <NavRefresh>
            <svg width="30" height="30" viewBox="0 0 30 30"><path d="M8 6A12 12 0 1 0 22 6" fill="none" stroke="#d8ecf8" strokeWidth="3" transform="rotate(10 15 15)" /><path d="M6 1l3 8 7-3z" fill="#d8ecf8" /></svg>
          </NavRefresh>
        </Nav>
      </Header>

      <ActionBar>
        <Btn $w={96}>Save</Btn>
        <Btn $w={116}>Cancel</Btn>
        <Btn $w={202} $ml={156}>Undo Changes</Btn>
      </ActionBar>

      <Body>
        <Sidebar>
          <TreeHead><TreeArrow />Preferences</TreeHead>
          <TreeList>
            {TREE.map(t => (
              <TreeItem key={t} $sel={t === 'Signatures'}>
                <TreeIcon>{TreeIcons[t]}</TreeIcon>
                {t}
              </TreeItem>
            ))}
          </TreeList>
          <Cal>
            <CalHead>
              <CalArrows $g={26}>
                <Tri d="M8 2v14L0 9zM16 2v14L8 9z" />
                <Tri d="M10 2v14L2 9z" />
              </CalArrows>
              <CalTitle>April 2016</CalTitle>
              <CalArrows $g={20}>
                <Tri d="M6 2v14l8-7z" />
                <Tri d="M0 2v14l8-7zM8 2v14l8-7z" />
              </CalArrows>
            </CalHead>
            <CalRow $h={31} $line>
              {['S', 'M', 'T', 'W', 'T', 'F', 'S'].map((d, i) => <CalCell key={i} $c="#999">{d}</CalCell>)}
            </CalRow>
            {CAL.map((row, r) => (
              <CalRow $h={40} key={r}>
                {row.map(([d, b, c, sel], i) => <CalCell key={i} $b={b} $c={c} $sel={sel}>{d}</CalCell>)}
              </CalRow>
            ))}
          </Cal>
        </Sidebar>
        <Sash>{[0, 1, 2, 3, 4, 5].map(i => <SashDot key={i} />)}</Sash>
        <Main>
          <SectionBar $mt={12}>Signatures</SectionBar>
          <SigTop>
            <SigList><SigItem>Corporate Signature</SigItem></SigList>
            <SigRight>
              <NameRow>
                <NameLabel>Name:</NameLabel>
                <TextBox $w={386}>Corporate Signature</TextBox>
                <FormatBtn>Format As HTML<Caret $s={7} /></FormatBtn>
              </NameRow>
              <McRow $mt={13}>
                <McGroup>
                  <McSelect $w={194} $first>Sans Serif<Caret $s={8} $c="#333" /></McSelect>
                  <McSelect $w={198} $pl={13}>12pt<Caret $s={8} $c="#333" /></McSelect>
                  <McSelect $w={196}>Paragraph<Caret $s={8} $c="#333" /></McSelect>
                </McGroup>
                <McGroup>
                  <McBtn $first><Glyph $s={30} $b>B</Glyph></McBtn>
                  <McBtn><Glyph $s={34} $serif $i>I</Glyph></McBtn>
                  <McBtn><Glyph $s={28} $d="underline">U</Glyph></McBtn>
                  <McBtn><Glyph $s={30} $d="line-through">S</Glyph></McBtn>
                  <McBtn><Glyph $s={30} $serif $i $b $d="underline">T</Glyph><SmallX>x</SmallX></McBtn>
                </McGroup>
                <McGroup>
                  <McBtn $first $w={82} $gap={10}><ColorA><ColorALetter>A</ColorALetter><ColorBar /></ColorA><Caret $s={7} $c="#333" /></McBtn>
                  <McBtn $w={85} $gap={10}><ColorA><ColorALetter $bg="#bdbdbd">A</ColorALetter><ColorBar /></ColorA><Caret $s={7} $c="#333" /></McBtn>
                </McGroup>
                <McGroup>
                  <McBtn $first>
                    <svg width="30" height="26" viewBox="0 0 30 26"><path d="M0 0h30v4H0zM0 22h30v4H0zM0 7h19v4H0zM0 15h19v4H0zM30 8v10l-7-5z" fill="#222" /></svg>
                  </McBtn>
                  <McBtn>
                    <svg width="30" height="26" viewBox="0 0 30 26"><path d="M0 0h30v4H0zM0 22h30v4H0zM11 7h19v4H11zM11 15h19v4H11zM0 8v10l7-5z" fill="#222" /></svg>
                  </McBtn>
                  <McBtn $w={85} $gap={12}>
                    <svg width="28" height="26" viewBox="0 0 28 26"><path d="M0 1h4v4H0zM0 11h4v4H0zM0 21h4v4H0zM9 1h19v4H9zM9 11h19v4H9zM9 21h19v4H9z" fill="#222" /></svg>
                    <Caret $s={7} $c="#333" />
                  </McBtn>
                  <McBtn $w={85} $gap={12}>
                    <svg width="28" height="28" viewBox="0 0 28 28"><path d="M9 2h19v4H9zM9 12h19v4H9zM9 22h19v4H9zM1 0h4v8H4V2H1zM1 11h5v4H3v1h3v2H1v-4h3v-1H1zM1 21h5v7H1v-2h3v-1H2v-1h2v-1H1z" fill="#222" /></svg>
                    <Caret $s={7} $c="#333" />
                  </McBtn>
                  <McBtn>
                    <svg width="30" height="26" viewBox="0 0 30 26"><path d="M13 1v4Q7 6 7 11q6-1 6 7 0 7-6 7-7 0-7-9Q0 5 13 1zM30 1v4q-6 1-6 6 6-1 6 7 0 7-6 7-7 0-7-9 0-11 13-15z" fill="#222" /></svg>
                  </McBtn>
                </McGroup>
              </McRow>
              <McRow $mt={5}>
                <McGroup>
                  <McBtn $first><Bars rows={[[0, 30], [0, 19], [0, 30], [0, 19]]} /></McBtn>
                  <McBtn><Bars rows={[[0, 30], [6, 18], [0, 30], [6, 18]]} /></McBtn>
                  <McBtn><Bars rows={[[0, 30], [11, 19], [0, 30], [11, 19]]} /></McBtn>
                  <McBtn><Bars rows={[[0, 30], [0, 30], [0, 30], [0, 30]]} /></McBtn>
                </McGroup>
                <McGroup>
                  <McBtn $first>
                    <svg width="28" height="28" viewBox="0 0 28 28"><rect x="1" y="1" width="26" height="26" fill="#fff" stroke="#222" strokeWidth="2" /><path d="M2 26V22L10 11l6 9 3-3 7 9z" fill="#222" /><circle cx="20" cy="8" r="3" fill="#222" /></svg>
                  </McBtn>
                  <McBtn>
                    <svg width="30" height="30" viewBox="0 0 30 30"><g fill="none" stroke="#333" strokeWidth="2.500" transform="rotate(45 15 15)"><rect x="10" y="-2" width="10" height="17" rx="4" /><rect x="10" y="15" width="10" height="17" rx="4" /><path d="M15 9v12" /></g></svg>
                  </McBtn>
                  <McBtn>
                    <svg width="30" height="30" viewBox="0 0 30 30"><circle cx="15" cy="15" r="13" fill="none" stroke="#222" strokeWidth="2" /><circle cx="10" cy="11" r="2" fill="#222" /><circle cx="20" cy="11" r="2" fill="#222" /><path d="M8 18q7 8 14 0" fill="none" stroke="#222" strokeWidth="2" /></svg>
                  </McBtn>
                  <McBtn><Glyph $s={40} $serif>Ω</Glyph></McBtn>
                  <McBtn><svg width="30" height="4" viewBox="0 0 30 4"><rect width="30" height="4" fill="#222" /></svg></McBtn>
                  <McBtn $w={82} $gap={10}>
                    <svg width="30" height="26" viewBox="0 0 30 26"><path d="M1 1h28v24H1zM1 9h28M1 17h28M10 1v24M20 1v24" fill="none" stroke="#222" strokeWidth="2" /></svg>
                    <Caret $s={7} $c="#333" />
                  </McBtn>
                </McGroup>
                <McGroup>
                  <McBtn $first $w={53}><svg width="26" height="30" viewBox="0 0 26 30"><path d="M13 1L1 11l12 9v-6q8 0 8 15 4-5 4-11 0-9-12-10z" fill="#b0b0b0" /></svg></McBtn>
                  <McBtn $w={53}><svg width="26" height="30" viewBox="0 0 26 30"><path d="M13 1l12 10-12 9v-6q-8 0-8 15-4-5-4-11 0-9 12-10z" fill="#b0b0b0" /></svg></McBtn>
                </McGroup>
                <McGroup>
                  <McBtn $first $w={53}>
                    <svg width="28" height="32" viewBox="0 0 28 32"><path d="M1 6h6V2h8v4h5v8h-6v16H1z" fill="#222" /><rect x="11" y="13" width="16" height="18" fill="#fff" stroke="#222" strokeWidth="2" /><path d="M15 18h8M19 18v9" stroke="#222" strokeWidth="2" /></svg>
                  </McBtn>
                  <McBtn $w={53}>
                    <svg width="26" height="22" viewBox="0 0 26 22"><path d="M9 2L2 11l7 9M17 2l7 9-7 9" fill="none" stroke="#222" strokeWidth="2.500" /></svg>
                  </McBtn>
                </McGroup>
              </McRow>
              <Editor>
                <SigDoc>
                  <SigHead>
                    <div>
                      <SigName>Siva Kusampudi</SigName>
                      <SigLine>Lead - Web and Social Marketing</SigLine>
                    </div>
                    <Brand>
                      <BrandDot />
                      <BrandTitle>MIRACLE</BrandTitle>
                      <BrandSub>SOFTWARE SYSTEMS</BrandSub>
                    </Brand>
                  </SigHead>
                  <SigRule />
                  <SigBody>
                    <div>
                      <div><b>Phone:</b> (248)-412-0428</div>
                      <div><b>Mobile:</b> (770)-226-6889</div>
                      <div><b>Email:</b></div>
                    </div>
                    <SigAddr>
                      <div>Miracle Software Systems,</div>
                      <div>Inc.</div>
                      <div>6465 East John's Crossing</div>
                    </SigAddr>
                  </SigBody>
                </SigDoc>
                <VBar><VThumb /></VBar>
                <HBar><HThumb /></HBar>
              </Editor>
            </SigRight>
          </SigTop>
          <SigBottom>
            <Btn $w={178}>New Signature</Btn>
            <Btn $w={119} $ml={8}>Delete</Btn>
            <AttachLabel>Attach Contact as vCard:</AttachLabel>
            <TextBox $w={379} $h={35} />
            <Btn $w={121} $ml={13}>Browse...</Btn>
            <Btn $w={118} $ml={11}>Clear</Btn>
          </SigBottom>

          <SectionBar $mt={67}>Using Signatures</SectionBar>
          <ColHead>
            <ColLabel>New Messages</ColLabel>
            <ColLabel>Replies &amp; Forwards</ColLabel>
          </ColHead>
          <AccountRow>
            <RowLabel $w={318}>Primary Account:</RowLabel>
            <SelectWrap $ml={13}>
              <Select>No signature<Caret $s={7} /></Select>
              <Popup $l={-1} $t={50} $w={271} $h={94} $pt={7} $pl={6} $shadow>
                <PopNo $i={15}>No signature</PopNo>
                <PopSel $w={248} $i={15}>Corporate Signature</PopSel>
              </Popup>
            </SelectWrap>
            <SelectWrap $ml={12}>
              <Select>No signature<Caret $s={7} /></Select>
              <Popup $l={1} $t={49} $w={284} $h={96} $pt={6} $pl={12}>
                <PopNo $i={15}>No signature</PopNo>
                <PopSel $w={247} $i={14}>Corporate Signature</PopSel>
              </Popup>
            </SelectWrap>
          </AccountRow>
          <Divider />
          <HiddenRow>ge<HiddenEnd>s</HiddenEnd></HiddenRow>
          <PlaceRow>
            <RowLabel $w={315}>Signature Placement:</RowLabel>
            <RadioWrap $ml={17} $mr={5}><RadioOn><RadioPip /></RadioOn><RedRing /></RadioWrap>
            <PlaceText>Above included messages</PlaceText>
            <RadioWrap $ml={29} $mr={6}><RadioOff /></RadioWrap>
            <PlaceText>Below included messages</PlaceText>
          </PlaceRow>
        </Main>
      </Body>
    </Page>
  );
}
